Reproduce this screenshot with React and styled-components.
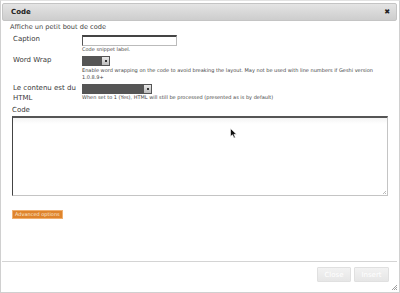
import React from "react";
import styled, { createGlobalStyle } from "styled-components";

const Global = createGlobalStyle`
  html, body { margin: 0; padding: 0; background: #fff; }
  body { font-family: "DejaVu Sans", Verdana, sans-serif; color: #333; }
  * { box-sizing: border-box; }
`;

const Dialog = styled.div`
  position: relative;
  width: 400px;
  height: 293px;
  border: 1px solid #d0d0d0;
  border-top-color: #e2e2e2;
  padding: 1px 2px 0 1px;
  display: flex;
  flex-direction: column;
  background: #fff;
`;

const TitleBar = styled.div`
  height: 18px;
  margin-top: 1px;
  border: 1px solid #c4c4c4;
  border-radius: 2px;
  background: linear-gradient(#e4e4e4, #cdcdcd);
  display: flex;
  align-items: center;
  justify-content: space-between;
  padding: 0 6px 0 8px;
`;

const Title = styled.span`
  font-size: 7px;
  font-weight: bold;
  color: #222;
`;

const CloseX = styled.span`
  font-size: 7px;
  color: #222;
  line-height: 1;
`;

const Body = styled.div`
  flex: 1;
  padding: 2px 9px 0 8px;
  display: flex;
  flex-direction: column;
`;

const Intro = styled.div`
  font-size: 6.6px;
  line-height: 9px;
  color: #444;
  height: 9px;
`;

const Row = styled.div`
  display: grid;
  grid-template-columns: 72px 1fr;
  margin-top: ${p => p.$mt || 0}px;
`;

const Label = styled.div`
  font-size: 7px;
  line-height: 9.5px;
  color: #3a3a3a;
  padding-left: 3px;
`;

const Field = styled.div`
  display: flex;
  flex-direction: column;
`;

const TextInput = styled.div`
  width: 95px;
  height: 11px;
  border: 1px solid #bbb;
  border-top: 2px solid #444;
  border-left: 1px solid #555;
  background: #fff;
`;

const Select = styled.div`
  width: ${p => p.$w}px;
  height: 10px;
  background: #555;
  display: flex;
  justify-content: flex-end;
  padding: 1px;
`;

const SelArrow = styled.div`
  width: 7px;
  height: 8px;
  background: linear-gradient(#e8e8e8, #bbb);
  display: flex;
  align-items: center;
  justify-content: center;
  &::after {
    content: "";
    width: 2px;
    height: 2px;
    background: #333;
  }
`;

const Help = styled.div`
  font-size: 5px;
  line-height: 7px;
  color: #444;
  margin-top: ${p => p.$mt || 0}px;
  white-space: ${p => (p.$nowrap ? "nowrap" : "normal")};
`;

const CodeLabel = styled.div`
  font-size: 7px;
  line-height: 9px;
  color: #3a3a3a;
  padding-left: 2px;
  margin-top: 3px;
`;

const TextArea = styled.div`
  margin-top: 1px;
  margin-left: 2px;
  height: 80px;
  border: 1px solid #c4c4c4;
  border-top: 2px solid #555;
  border-left: 1px solid #444;
  background: linear-gradient(#f4f4f4, #fff 6px);
  position: relative;
`;

const Grip = styled.svg`
  position: absolute;
  right: 0;
  bottom: 0;
`;

const AdvButton = styled.div`
  margin-top: 14px;
  margin-left: 2px;
  align-self: flex-start;
  background: #df842c;
  border: 1px solid #f0b070;
  color: #fbe8d6;
  font-size: 5px;
  line-height: 7px;
  padding: 0 2px;
`;

const Footer = styled.div`
  border-top: 1px solid #d4d4d4;
  height: 31px;
  display: flex;
  justify-content: flex-end;
  align-items: flex-start;
  gap: 3px;
  padding: 5px 8px 0 0;
`;

const FootButton = styled.div`
  width: ${p => p.$w}px;
  height: 15px;
  border: 1px solid #e0e0e0;
  border-radius: 1px;
  background: linear-gradient(#f2f2f2, #e6e6e6);
  color: #fff;
  font-size: 7px;
  display: flex;
  align-items: center;
  justify-content: center;
`;

const Cursor = styled.svg`
  position: absolute;
  left: 229px;
  top: 127px;
`;

const CornerGrip = styled.svg`
  position: absolute;
  right: 1px;
  bottom: 1px;
`;

export default function App() {
  return (
    <>
      <Global />
      <Dialog>
        <TitleBar>
          <Title>Code</Title>
          <CloseX>✖</CloseX>
        </TitleBar>
        <Body>
          <Intro>Affiche un petit bout de code</Intro>
          <Row $mt={3}>
            <Label>Caption</Label>
            <Field>
              <TextInput />
              <Help $mt={0}>Code snippet label.</Help>
            </Field>
          </Row>
          <Row $mt={3}>
            <Label>Word Wrap</Label>
            <Field>
              <Select $w={28}><SelArrow /></Select>
              <Help $mt={1}>
                Enable word wrapping on the code to avoid breaking the layout. May not be used with line numbers if Geshi version 1.0.8.9+
              </Help>
            </Field>
          </Row>
          <Row $mt={3}>
            <Label>Le contenu est du<br />HTML</Label>
            <Field>
              <Select $w={70}><SelArrow /></Select>
              <Help $nowrap $mt={0}>When set to 1 (Yes), HTML will still be processed (presented as is by default)</Help>
            </Field>
          </Row>
          <CodeLabel>Code</CodeLabel>
          <TextArea>
            <Grip width="5" height="5" viewBox="0 0 5 5">
              <path d="M4 1 L1 4 M4 3 L3 4" stroke="#aaa" strokeWidth="0.8" />
            </Grip>
          </TextArea>
          <AdvButton>Advanced options</AdvButton>
        </Body>
        <Footer>
          <FootButton $w={34}>Close</FootButton>
          <FootButton $w={35}>Insert</FootButton>
        </Footer>
        <Cursor width="8" height="11" viewBox="0 0 8 11">
          <path d="M0.5 0.5 L0.5 8.5 L2.5 6.8 L4 10 L5.3 9.4 L3.9 6.3 L6.5 6.3 Z" fill="#111" stroke="#fff" strokeWidth="0.6" />
        </Cursor>
        <CornerGrip width="7" height="7" viewBox="0 0 7 7">
          <path d="M6 1 L1 6 M6 3 L3 6 M6 5 L5 6" stroke="#888" strokeWidth="0.8" />
        </CornerGrip>
      </Dialog>
    </>
  );
}
